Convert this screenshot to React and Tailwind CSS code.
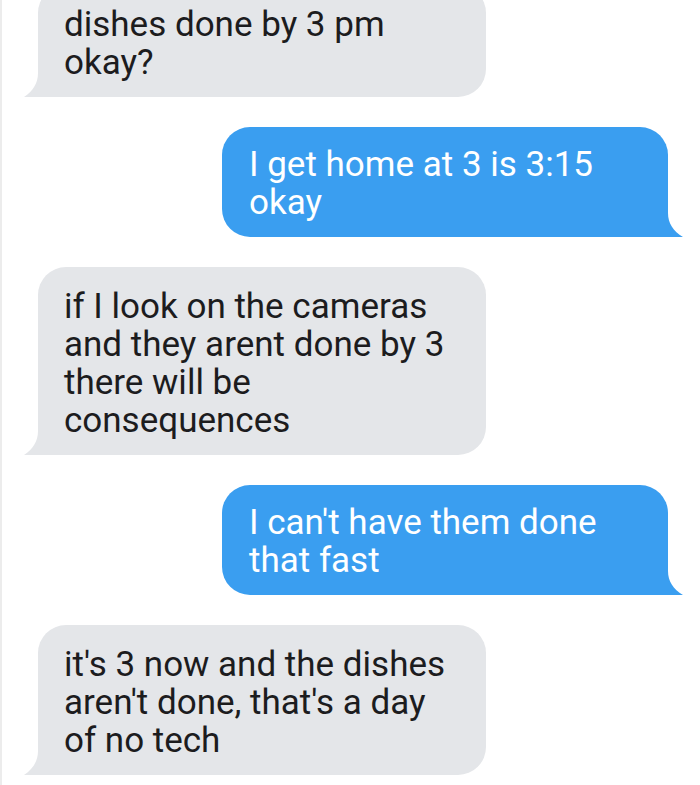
const messages = [
  { from: "them", lines: ["dishes done by 3 pm", "okay?"] },
  { from: "me", lines: ["I get home at 3 is 3:15", "okay"] },
  {
    from: "them",
    lines: ["if I look on the cameras", "and they arent done by 3", "there will be", "consequences"],
  },
  { from: "me", lines: ["I can't have them done", "that fast"] },
  { from: "them", lines: ["it's 3 now and the dishes", "aren't done, that's a day", "of no tech"] },
];

const TailLeft = () => (
  <svg
    className="absolute -left-[14px] bottom-0 text-[#e4e6e9]"
    width="24"
    height="24"
    viewBox="0 0 24 24"
  >
    <path d="M14 0 C14 10 9 18 0 24 L24 24 L24 0 Z" fill="currentColor" />
  </svg>
);

const TailRight = () => (
  <svg
    className="absolute -right-[15px] bottom-0 text-[#3a9ef0]"
    width="24"
    height="24"
    viewBox="0 0 24 24"
  >
    <path d="M9 0 C9 10 14 18 24 24 L0 24 L0 0 Z" fill="currentColor" />
  </svg>
);

const Bubble = ({ from, lines }) => {
  if (from === "me") {
    return (
      <div className="relative ml-[222px] w-[446px] rounded-[28px] rounded-br-[6px] bg-[#3a9ef0] pl-[27px] pr-4 pt-[19px] pb-[15px] text-white">
        {lines.map((line, i) => (
          <p key={i}>{line}</p>
        ))}
        <TailRight />
      </div>
    );
  }
  return (
    <div className="relative ml-[38px] w-[448px] rounded-[28px] rounded-bl-[6px] bg-[#e4e6e9] pl-[26px] pr-4 pt-[21px] pb-[15px] text-[#1c1c1e]">
      {lines.map((line, i) => (
        <p key={i}>{line}</p>
      ))}
      <TailLeft />
    </div>
  );
};

const App = () => {
  return (
    <div className="h-[785px] w-[700px] overflow-hidden border-l-2 border-[#ececec] bg-white font-['Roboto',sans-serif] text-[35px] leading-[38px]">
      <div className="-mt-[15px] -ml-[2px] flex flex-col gap-[30px]">
        {messages.map((msg, i) => (
          <Bubble key={i} from={msg.from} lines={msg.lines} />
        ))}
      </div>
    </div>
  );
};

export default App;
